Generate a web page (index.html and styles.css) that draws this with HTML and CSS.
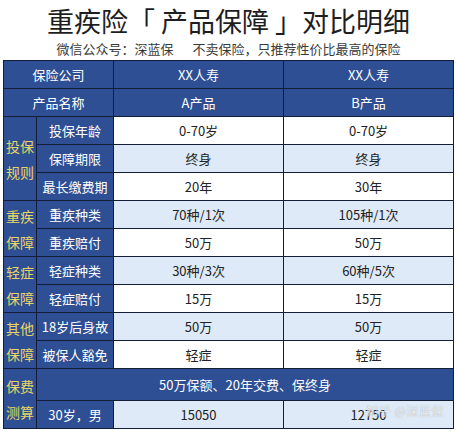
FILE: index.html
```html
<!DOCTYPE html>
<html lang="zh-CN">
<head>
  <meta charset="UTF-8" />
  <meta name="viewport" content="width=device-width, initial-scale=1.0">
  <title>重疾险产品保障对比明细</title>
  <link rel="stylesheet" href="styles.css">
</head>
<body>

  <div class="page">
    <h1 class="title">重疾险「 产品保障 」对比明细</h1>
    <p class="subtitle">微信公众号：深蓝保<span class="gap"></span>不卖保险，只推荐性价比最高的保险</p>

    <div class="table-wrap">
      <table class="compare">
        <colgroup>
          <col class="col-group">
          <col class="col-label">
          <col class="col-value">
          <col class="col-value">
        </colgroup>
        <tr class="head">
          <td colspan="2">保险公司</td>
          <td>XX人寿</td>
          <td>XX人寿</td>
        </tr>
        <tr class="head">
          <td colspan="2">产品名称</td>
          <td>A产品</td>
          <td>B产品</td>
        </tr>

        <tr>
          <td class="group" rowspan="3">投保<br>规则</td>
          <td class="label">投保年龄</td>
          <td>0-70岁</td>
          <td>0-70岁</td>
        </tr>
        <tr class="alt">
          <td class="label">保障期限</td>
          <td>终身</td>
          <td>终身</td>
        </tr>
        <tr>
          <td class="label">最长缴费期</td>
          <td>20年</td>
          <td>30年</td>
        </tr>

        <tr class="alt">
          <td class="group" rowspan="2">重疾<br>保障</td>
          <td class="label">重疾种类</td>
          <td>70种/1次</td>
          <td>105种/1次</td>
        </tr>
        <tr>
          <td class="label">重疾赔付</td>
          <td>50万</td>
          <td>50万</td>
        </tr>

        <tr class="alt">
          <td class="group" rowspan="2">轻症<br>保障</td>
          <td class="label">轻症种类</td>
          <td>30种/3次</td>
          <td>60种/5次</td>
        </tr>
        <tr>
          <td class="label">轻症赔付</td>
          <td>15万</td>
          <td>15万</td>
        </tr>

        <tr class="alt">
          <td class="group" rowspan="2">其他<br>保障</td>
          <td class="label">18岁后身故</td>
          <td>50万</td>
          <td>50万</td>
        </tr>
        <tr>
          <td class="label">被保人豁免</td>
          <td>轻症</td>
          <td>轻症</td>
        </tr>

        <tr class="band">
          <td class="group" rowspan="2">保费<br>测算</td>
          <td colspan="3">50万保额、20年交费、保终身</td>
        </tr>
        <tr class="alt">
          <td class="label">30岁，男</td>
          <td>15050</td>
          <td>12750</td>
        </tr>
      </table>
      <div class="watermark">知乎 @深蓝保</div>
    </div>
  </div>

</body>
</html>
```

FILE: styles.css
```css
body {
  margin: 0;
  padding: 0;
  background-color: #fff;
  font-family: "Noto Sans CJK SC", "Noto Sans", sans-serif;
  color: #222;
}

.page {
  padding: 3px 3px 0 3px;
}

.title {
  margin: 0;
  font-size: 27px;
  font-weight: 400;
  line-height: 36px;
  text-align: center;
  color: #1e1e1e;
}

.subtitle {
  margin: 1px 0 2px 0;
  font-size: 13px;
  line-height: 18px;
  text-align: center;
  color: #3a3a3a;
}

.subtitle .gap {
  display: inline-block;
  width: 19px;
}

.table-wrap {
  position: relative;
}

.compare {
  width: 451px;
  border-collapse: collapse;
  table-layout: fixed;
  font-size: 13px;
}

.col-group {
  width: 33px;
}

.col-label {
  width: 77px;
}

.col-value {
  width: 170px;
}

.compare td {
  height: 27px;
  padding: 0;
  border: 1px solid #141d38;
  text-align: center;
  vertical-align: middle;
  line-height: 16px;
  background-color: #fff;
}

.compare tr.alt td {
  background-color: #deeaf7;
}

/* blue cells: header rows, row labels, group labels, the band */
.compare tr.head td,
.compare tr td.label,
.compare tr td.group,
.compare tr.band td {
  background-color: #2e4f93;
  color: #fff;
}

.compare tr td.group,
.compare tr.band td.group {
  color: #e9d466;
  font-size: 14px;
  line-height: 26px;
}

.compare tr.band td {
  height: 31px;
}

.watermark {
  position: absolute;
  right: 10px;
  bottom: 10px;
  font-size: 12px;
  color: rgba(255, 255, 255, 0.8);
  text-shadow: 0 0 1px rgba(0, 0, 0, 0.35);
  letter-spacing: 0.5px;
}
```
